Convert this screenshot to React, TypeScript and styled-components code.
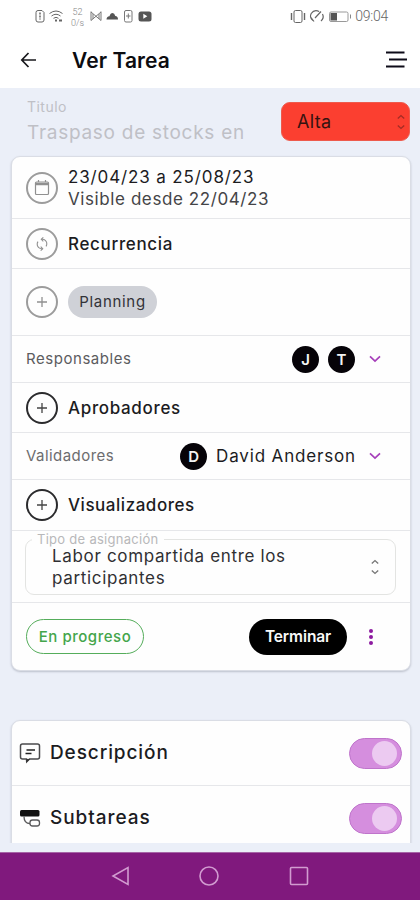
import React from "react";
import styled, { createGlobalStyle } from "styled-components";

const Global = createGlobalStyle`
  * { box-sizing: border-box; }
  body { margin: 0; background: #ebeff8; }
`;

const Screen = styled.div`
  display: flex;
  flex-direction: column;
  width: 420px;
  height: 900px;
  overflow: hidden;
  background: #ebeff8;
  font-family: Inter, "Liberation Sans", sans-serif;
  color: #1c1c1f;
`;

const Label = styled.span<{
  $size?: number;
  $weight?: number;
  $color?: string;
  $spacing?: number;
  $line?: number;
}>`
  display: block;
  white-space: nowrap;
  font-size: ${(p) => p.$size ?? 17}px;
  font-weight: ${(p) => p.$weight ?? 400};
  color: ${(p) => p.$color ?? "#1c1c1f"};
  letter-spacing: ${(p) => p.$spacing ?? 0.66}px;
  line-height: ${(p) => p.$line ?? 22}px;
`;

const StatusBar = styled.div`
  display: flex;
  justify-content: space-between;
  flex: none;
  height: 32px;
  padding: 0 32px 0 34px;
  background: #fff;
`;

const StatusGroup = styled.div`
  display: flex;
  align-items: center;
`;

const Speed = styled.div`
  display: flex;
  flex-direction: column;
  align-items: center;
  width: 16px;
  margin: 3px 3px 0 1px;
  padding-left: 1px;
  font: 300 9px/10.5px Roboto, sans-serif;
  color: #858585;
`;

const Clock = styled.span`
  margin-left: 3px;
  font: 300 14px/20px Roboto, sans-serif;
  letter-spacing: -0.25px;
  color: #666;
`;

const Header = styled.header`
  display: flex;
  align-items: center;
  flex: none;
  height: 56px;
  padding: 0 13px 0 20px;
  background: #fff;
`;

const PageTitle = styled.h1`
  flex: 1;
  margin: 1px 0 0 35px;
  font: 600 21px/28px Inter, sans-serif;
  letter-spacing: 0.1px;
  color: #0c0c10;
`;

const TitleRow = styled.div`
  display: flex;
  justify-content: space-between;
  flex: none;
  height: 68px;
  padding: 8px 10px 0 27px;
`;

const TitleField = styled.div`
  width: 220px;
  overflow: hidden;
`;

const Priority = styled.div`
  display: flex;
  align-items: center;
  justify-content: space-between;
  width: 129px;
  height: 39px;
  margin-top: 6px;
  padding: 0 3px 0 15px;
  border: 1px solid #ee5a4c;
  border-radius: 9px;
  background: #fb3f30;
`;

const Card = styled.section`
  display: flex;
  flex-direction: column;
  flex: none;
  margin: 0 9px 0 11px;
  border: 1px solid #dadde5;
  border-radius: 9px;
  background: #fefefe;
  box-shadow: 0 1px 2px rgba(50, 55, 75, 0.25);
`;

const Row = styled.div<{ $height: number }>`
  display: flex;
  align-items: center;
  height: ${(p) => p.$height}px;
  padding: 0 14px;
  border-bottom: 1px solid #e6e7ea;
  &:last-child { border-bottom: 0; }
`;

const CircleButton = styled.span<{ $dark?: boolean }>`
  display: flex;
  align-items: center;
  justify-content: center;
  flex: none;
  width: 32px;
  height: 32px;
  margin-right: 10px;
  border: 2px solid ${(p) => (p.$dark ? "#2b2b2d" : "#9c9c9c")};
  border-radius: 50%;
  color: ${(p) => (p.$dark ? "#444" : "#909090")};
`;

const Chip = styled.span`
  display: flex;
  align-items: center;
  justify-content: center;
  width: 89px;
  height: 32px;
  border-radius: 16px;
  background: #cfd1d7;
`;

const People = styled.div`
  display: flex;
  align-items: center;
  flex: 1;
  justify-content: flex-end;
  padding-right: 14px;
`;

const Avatar = styled.span`
  display: flex;
  align-items: center;
  justify-content: center;
  width: 27px;
  height: 27px;
  margin-right: 9px;
  border-radius: 50%;
  background: #060308;
  color: #f3f3f3;
  font: 600 15px/27px Inter, sans-serif;
`;

const AvatarGroup = styled.div`
  display: flex;
  margin-right: 4px;
`;

const PersonName = styled(Label)`
  margin-right: 12px;
`;

const AssignRow = styled.div`
  height: 72px;
  padding: 0 14px 0 13px;
  border-bottom: 1px solid #e6e7ea;
`;

const AssignField = styled.fieldset`
  display: flex;
  align-items: center;
  justify-content: space-between;
  height: 64px;
  margin: 0;
  padding: 0 15px 8px 26px;
  border: 1px solid #e3e4e2;
  border-radius: 9px;
  min-width: 0;
`;

const AssignLegend = styled.legend`
  margin-left: -20px;
  padding: 0 5px;
  height: 17px;
  font-size: 13px;
  line-height: 16px;
  letter-spacing: 0.28px;
  color: #b8b8ba;
`;

const Status = styled.span`
  display: flex;
  align-items: center;
  justify-content: center;
  width: 118px;
  height: 35px;
  border: 1px solid #55ad5b;
  border-radius: 18px;
`;

const FinishButton = styled.button`
  width: 98px;
  height: 36px;
  margin: 0 20px 0 auto;
  padding: 0;
  border: 0;
  border-radius: 18px;
  background: #000;
  color: #f8f8f8;
  font: 600 15.5px/36px Inter, sans-serif;
  letter-spacing: -0.1px;
`;

const FooterRow = styled(Row)`
  padding-right: 35px;
`;

const Sections = styled.div`
  flex: none;
  height: 124px;
  margin-top: 48px;
  overflow: hidden;
  padding-top: 1px;
`;

const SectionRow = styled.div`
  display: flex;
  align-items: center;
  gap: 9px;
  height: 65px;
  padding: 0 8px 0 7px;
  border-bottom: 1px solid #e6e7ea;
`;

const Switch = styled.span`
  display: flex;
  align-items: center;
  justify-content: flex-end;
  width: 53px;
  height: 31px;
  margin-left: auto;
  padding-right: 4px;
  border: 1px solid #bf74cb;
  border-radius: 16px;
  background: #d58ede;
`;

const Knob = styled.span`
  width: 25px;
  height: 25px;
  border-radius: 50%;
  background: #eccaf1;
`;

const NavBar = styled.nav`
  display: flex;
  align-items: center;
  justify-content: center;
  gap: 68px;
  height: 48px;
  margin-top: auto;
  padding-bottom: 1px;
  border-top: 1px solid #a664a6;
  background: #80197d;
`;

const Icon = styled.svg.attrs((p) => ({ fill: "none", stroke: p.stroke ?? "currentColor" }))`
  display: block;
  flex: none;
  overflow: visible;
`;

const Plus = () => (
  <Icon width="12" height="12" viewBox="0 0 12 12" strokeWidth="1.3">
    <path d="M6 1v10M1 6h10" />
  </Icon>
);

const UpDown = ({ color = "#777" }: { color?: string }) => (
  <Icon width="10" height="16" viewBox="0 0 10 16" stroke={color} strokeWidth="1.4">
    <path d="M1.8 4.5 5 1.6l3.2 2.9M1.8 11.5 5 14.4l3.2-2.9" />
  </Icon>
);

const Chevron = () => (
  <Icon width="14" height="10" viewBox="0 0 14 10" stroke="#a63fba" strokeWidth="1.7">
    <path d="M2 2.3 7 7.1l5-4.8" />
  </Icon>
);

const StatusIcons = () => (
  <StatusGroup>
    <Icon width="34" height="32" viewBox="34 0 34 32" stroke="#666" strokeWidth="1">
      <path d="M38 10.5h4l2 2v7.500q0 2-2 2h-4q-2 0-2-2v-7.500q0-2 2-2z" />
      <path d="M40 12.500v7" strokeWidth="1.500" strokeDasharray="2 1" />
      <path d="M49.500 13.500q6.500-5 13 0M51.500 16q4.500-3.500 9 0M53.500 18.300q2.500-2 5 0" />
      <path d="M55 20.500h2M59 20.500h3" strokeWidth="1.800" />
    </Icon>
    <Speed>
      <span>52</span>
      <span>0/s</span>
    </Speed>
    <Icon width="64" height="32" viewBox="88 0 64 32" stroke="#777" strokeWidth="1">
      <path d="M91 11.500v9M101 11.500v9M91 12l10 8.500M101 12l-10 8.500M93 14v5M99 14v5" />
      <path d="M106.500 19.500q0-3 3-3.200 1-3.300 3-3.300t2.800 3q2.700.3 2.700 3.500z" fill="#555" stroke="none" />
      <rect x="124.500" y="10.500" width="7.500" height="11.500" rx="1.500" />
      <path d="M128.300 13.500v5M126 16h4.500" />
      <rect x="138.500" y="11.500" width="13" height="10" rx="2.500" fill="#555" stroke="none" />
      <path d="M143.300 13.800v5l4-2.500z" fill="#fff" stroke="none" />
    </Icon>
  </StatusGroup>
);

const StatusRight = () => (
  <StatusGroup>
    <Icon width="62" height="32" viewBox="290 0 62 32" stroke="#666" strokeWidth="1">
      <rect x="294" y="10.500" width="8" height="12" rx="1.500" />
      <path d="M291.500 13v7M304.500 13v7" strokeWidth="1.400" />
      <path d="M313 20.500q-4-3-1.800-7 3-4.500 8-2M322.500 14q2 4-1.500 7M315 18l6-6.500M311 17.500l3 4" strokeWidth="1.200" />
      <rect x="329.500" y="12" width="18.500" height="9.500" rx="1.500" stroke="#999" />
      <rect x="330.500" y="13" width="6.500" height="7.500" fill="#555" stroke="none" />
      <path d="M350.500 14.500v4" stroke="#888" />
    </Icon>
    <Clock>09:04</Clock>
  </StatusGroup>
);

const CalendarIcon = () => (
  <Icon width="16" height="17" viewBox="0 0 16 17" strokeWidth="1.2">
    <rect x="1.500" y="3" width="13" height="12.500" rx="1" />
    <path d="M1.500 5h13" strokeWidth="2.500" />
    <path d="M4.500 1v2M11.500 1v2" />
  </Icon>
);

const RepeatIcon = () => (
  <Icon width="14" height="16" viewBox="0 0 14 16" strokeWidth="1.1">
    <path d="M6.500 3.300C10 3 12 5.500 11.800 8q0 1.200-.8 2.400M7.500 12.700C4 13 2 10.500 2.200 8q0-1.200.8-2.400" />
    <path d="M8.300 1.300 6.300 3.300l2 2M5.700 10.700l2 2-2 2" />
  </Icon>
);

const CommentIcon = () => (
  <Icon width="22" height="22" viewBox="0 0 22 22" stroke="#4a4a4c" strokeWidth="1.5">
    <path d="M3.500 2h15q2 0 2 2v11q0 2-2 2h-8l-2.800 2.800L7.500 17h-4q-2 0-2-2V4q0-2 2-2z" />
    <path d="M7.500 8h8.500M6.500 11.500h6" stroke="#222" />
    <path d="M7.300 17h4l-4 3.500z" fill="#333" stroke="none" />
  </Icon>
);

const SubtaskIcon = () => (
  <Icon width="22" height="22" viewBox="0 0 22 22" stroke="#5a5a5c" strokeWidth="1.3">
    <rect x="1" y="3" width="19.500" height="6.500" rx="1.500" fill="#111" stroke="none" />
    <path d="M5 9.500q0 7 6 7" />
    <rect x="11" y="13" width="9.500" height="6" rx="2.500" />
  </Icon>
);

export default function App() {
  return (
    <Screen>
      <Global />
      <StatusBar>
        <StatusIcons />
        <StatusRight />
      </StatusBar>

      <Header>
        <Icon width="17" height="16" viewBox="0 0 17 16" stroke="#18181c" strokeWidth="1.7">
          <path d="M16 8H1.800M8.500 1 1.800 8l6.700 7" />
        </Icon>
        <PageTitle>Ver Tarea</PageTitle>
        <Icon width="22" height="18" viewBox="0 0 22 18" stroke="#0d0b18" strokeWidth="1.8">
          <path d="M1 1.500h18.500M4 8.500h18M1 15.500h18.500" />
        </Icon>
      </Header>

      <TitleRow>
        <TitleField>
          <Label $size={14} $color="#bfc0c6" $spacing={0.46}>Titulo</Label>
          <Label $size={19} $color="#bfc0c6" $spacing={0.72} $line={29}>Traspaso de stocks en</Label>
        </TitleField>
        <Priority>
          <Label $size={18} $color="#351310" $spacing={0.33}>Alta</Label>
          <UpDown color="#a52c25" />
        </Priority>
      </TitleRow>

      <Card>
        <Row $height={62}>
          <CircleButton><CalendarIcon /></CircleButton>
          <div>
            <Label $spacing={0.87}>23/04/23 a 25/08/23</Label>
            <Label $color="#444447" $spacing={0.59}>Visible desde 22/04/23</Label>
          </div>
        </Row>
        <Row $height={50}>
          <CircleButton><RepeatIcon /></CircleButton>
          <Label $weight={500}>Recurrencia</Label>
        </Row>
        <Row $height={67}>
          <CircleButton><Plus /></CircleButton>
          <Chip><Label $size={15} $color="#333338" $spacing={0.7}>Planning</Label></Chip>
        </Row>
        <Row $height={47}>
          <Label $size={15} $color="#5c5c5f" $spacing={0.54}>Responsables</Label>
          <People>
            <AvatarGroup>
              <Avatar>J</Avatar>
              <Avatar>T</Avatar>
            </AvatarGroup>
            <Chevron />
          </People>
        </Row>
        <Row $height={50}>
          <CircleButton $dark><Plus /></CircleButton>
          <Label $weight={500}>Aprobadores</Label>
        </Row>
        <Row $height={47}>
          <Label $size={15} $color="#6c6c6f" $spacing={0.45}>Validadores</Label>
          <People>
            <Avatar>D</Avatar>
            <PersonName $spacing={0.84}>David Anderson</PersonName>
            <Chevron />
          </People>
        </Row>
        <Row $height={51}>
          <CircleButton $dark><Plus /></CircleButton>
          <Label $weight={500} $spacing={0.53}>Visualizadores</Label>
        </Row>
        <AssignRow>
          <AssignField>
            <AssignLegend>Tipo de asignación</AssignLegend>
            <div>
              <Label $color="#303033">Labor compartida entre los</Label>
              <Label $color="#303033">participantes</Label>
            </div>
            <UpDown />
          </AssignField>
        </AssignRow>
        <FooterRow $height={67}>
          <Status><Label $size={15} $weight={500} $color="#44a54b" $spacing={0.54}>En progreso</Label></Status>
          <FinishButton>Terminar</FinishButton>
          <Icon width="8" height="18" viewBox="0 0 8 18">
            <g fill="#8d1ba0" stroke="none">
              <circle cx="4" cy="3" r="2" />
              <circle cx="4" cy="9" r="2" />
              <circle cx="4" cy="15" r="2" />
            </g>
          </Icon>
        </FooterRow>
      </Card>

      <Sections>
        <Card>
          <SectionRow>
            <CommentIcon />
            <Label $size={19} $weight={500} $spacing={0.9}>Descripción</Label>
            <Switch><Knob /></Switch>
          </SectionRow>
          <SectionRow>
            <SubtaskIcon />
            <Label $size={19} $weight={500} $spacing={0.95}>Subtareas</Label>
            <Switch><Knob /></Switch>
          </SectionRow>
        </Card>
      </Sections>

      <NavBar>
        <Icon width="20" height="22" viewBox="0 0 20 22" stroke="#d19bd0" strokeWidth="1.600">
          <path d="M18 2.500v17L3 11z" />
        </Icon>
        <Icon width="22" height="22" viewBox="0 0 22 22" stroke="#d19bd0" strokeWidth="1.600">
          <circle cx="11" cy="11" r="9" />
        </Icon>
        <Icon width="22" height="22" viewBox="0 0 22 22" stroke="#d19bd0" strokeWidth="1.600">
          <rect x="2.500" y="2.500" width="17" height="17" rx="1" />
        </Icon>
      </NavBar>
    </Screen>
  );
}
